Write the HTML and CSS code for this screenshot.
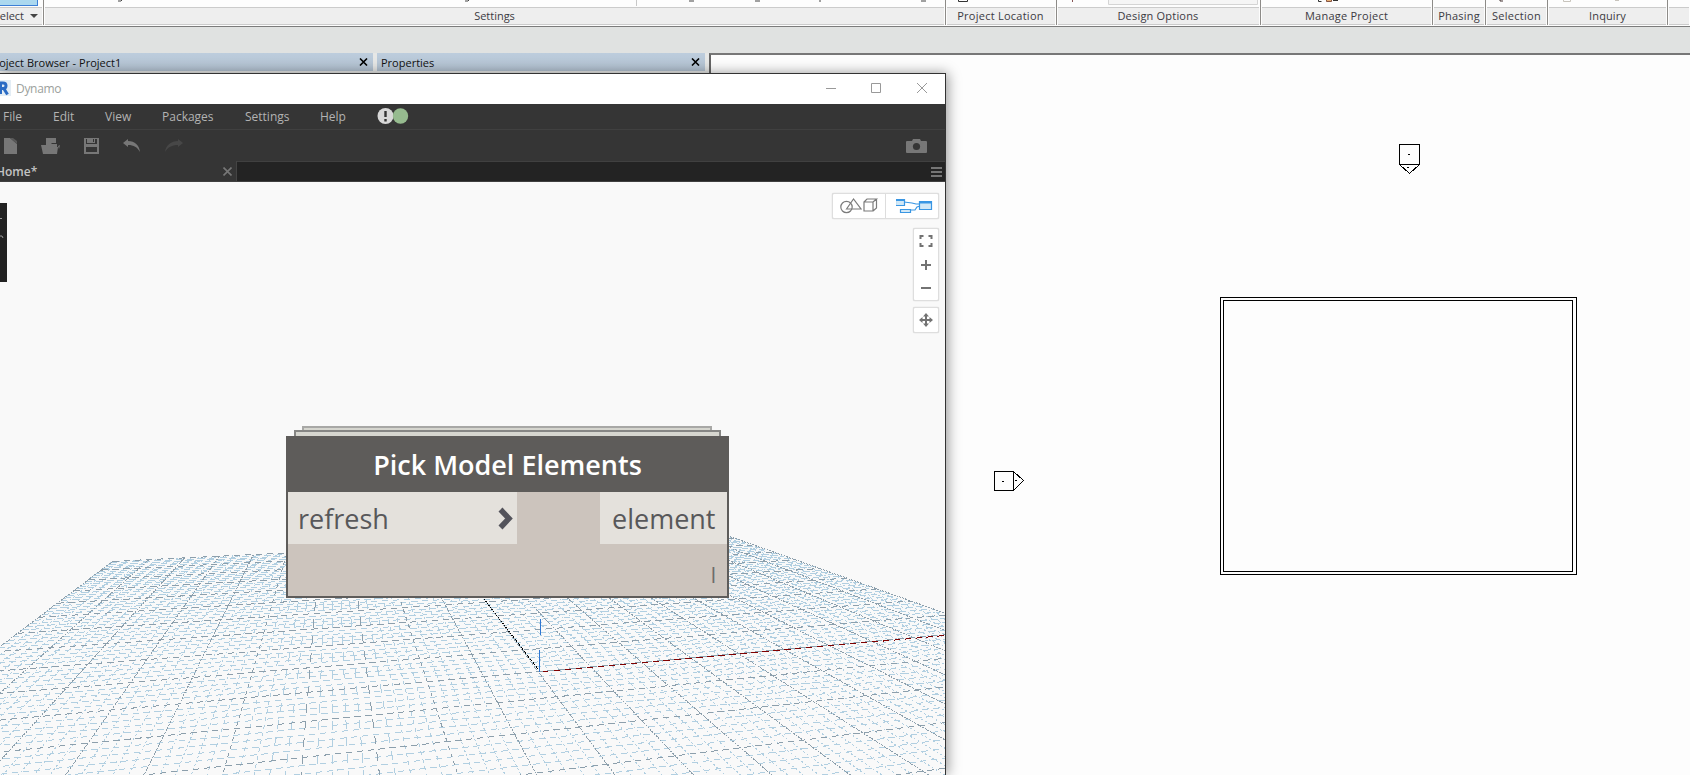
FILE: index.html
```html
<!DOCTYPE html>
<html lang="en">
<head>
<meta charset="utf-8">
<title>Dynamo</title>
<link rel="stylesheet" href="styles.css">
</head>
<body>
<div class="app">
  <header class="ribbon">
    <section class="panel panel-select"><div class="panel-tools"><span class="select-button"></span></div><div class="panel-label">Select<i class="caret"></i></div></section>
    <section class="panel panel-settings"><div class="panel-tools">
      <svg width="900" height="7"><path d="M74 1h3l1-1M421 1h3l1-1M645 1h5M711 1h5M776 0v2M877 1h5" stroke="#444" fill="none"/><path d="M592.500 0v6" stroke="#c8c8c8"/></svg></div><div class="panel-label">Settings</div></section>
    <section class="panel panel-location"><div class="panel-tools"><svg width="110" height="7"><path d="M12.500 0v1.500h9V0" stroke="#333" fill="none"/></svg></div><div class="panel-label">Project Location</div></section>
    <section class="panel panel-options"><div class="panel-tools"><svg width="203" height="7"><path d="M15.500 0v2" stroke="#855"/><path d="M51.500 0v4.500h149V0" stroke="#d4d4d4" fill="#f5f5f5"/></svg></div><div class="panel-label">Design Options</div></section>
    <section class="panel panel-manage"><div class="panel-tools"><svg width="171" height="7"><path d="M57.500 0v1.500h3M72 .5h5" stroke="#333" fill="none"/><path d="M65.500 0v1.500h5V0" stroke="#854" fill="#e8b070"/></svg></div><div class="panel-label">Manage Project</div></section>
    <section class="panel panel-phasing"><div class="panel-tools"></div><div class="panel-label">Phasing</div></section>
    <section class="panel panel-selection"><div class="panel-tools"><svg width="61" height="7"><path d="M14 0v1h3" stroke="#433" fill="none"/></svg></div><div class="panel-label">Selection</div></section>
    <section class="panel panel-inquiry"><div class="panel-tools"><svg width="119" height="7"><path d="M15.500 0v1.500h7V0M67 .5h4" stroke="#c8c4bc" fill="none"/></svg></div><div class="panel-label">Inquiry</div></section>
    <section class="panel panel-rest"><div class="panel-tools"></div><div class="panel-label"></div></section>
  </header>
  <div class="options-bar"></div>
  <div class="workspace">
    <div class="palette palette-browser"><span class="browser-title">Project Browser - Project1</span><svg width="9" height="8"><path d="M1 .5l7 7M8 .5l-7 7" stroke="#000" stroke-width="1.600"/></svg></div>
    <div class="palette palette-properties"><span>Properties</span><svg width="9" height="8"><path d="M1 .5l7 7M8 .5l-7 7" stroke="#000" stroke-width="1.600"/></svg></div>
    <main class="plan">
      <svg class="drawing" width="979" height="720" viewBox="711 55 979 720" fill="none" stroke="#000" shape-rendering="crispEdges">
        <path d="M1220.500 297.500h356v277h-356zM1223.500 300.500h349v271h-349z"/>
        <path d="M1399.500 144.500h20v20h-20zM1399.500 164.500l10 9 10-9M1408 154.500h2M1407 167.500h2"/>
        <path d="M994.500 471.500h19v19h-19zM1013.500 471.500l10 9-10 10M1002 481.500h2M1015 480.500h2"/>
      </svg>
    </main>
  </div>
</div>

<div class="dynamo">
  <div class="titlebar">
    <svg class="logo" width="11" height="16" viewBox="0 0 11 16"><path d="M0 0h11v16H0z" fill="#e3edf5"/><path d="M0 3h3c4 0 4 5.500 0 5.500H0M3.500 8l4 6.500M.5 2v12" fill="none" stroke="#2a6bc4" stroke-width="3"/></svg>
    <span class="window-title">Dynamo</span>
    <svg class="window-buttons" width="102" height="12" fill="none" stroke="#999"><path d="M0 6.500h10M45.500 1.500h9v9h-9z"/><path d="M91 1l10 10M101 1L91 11"/></svg>
  </div>
  <nav class="menu">
    <span class="m-file">File</span><span class="m-edit">Edit</span><span class="m-view">View</span><span class="m-packages">Packages</span><span class="m-settings">Settings</span><span class="m-help">Help</span>
    <svg width="32" height="16"><circle cx="8.500" cy="8" r="8" fill="#d8d8d8"/><path d="M8.500 3v6M8.500 11v2.500" stroke="#333" stroke-width="2.400"/><circle cx="23.500" cy="8" r="7.700" fill="#96bb8f"/></svg>
  </nav>
  <div class="toolbar">
    <svg width="13" height="16" fill="#777"><path d="M0 0h6l7 6v10H0z"/><path d="M6 0l7 6V3l-4-3z" fill="#595959"/></svg>
    <svg width="19" height="16" fill="#777"><path d="M5 0h10v5h-4L9 7H5zM0 7h8l2-1h6v3h1l-1 7H2zM17 8l2-1-1 4z"/></svg>
    <svg width="15" height="16"><path d="M0 0h15v16H0z" fill="#777"/><path d="M2 1h11v5H2zM2 9h11v5H2z" fill="#353535"/><path d="M3 1h8v4H3z" fill="#777"/><path d="M9 1h1v3H9z" fill="#333"/></svg>
    <svg width="18" height="16" fill="#777"><path d="M0 5l5-4v2c7 0 11 4 12 11C14 9 11 7 5 7v2z"/></svg>
    <svg width="18" height="16" fill="#474747"><path d="M18 5l-5-4v2C6 3 1 7 0 14c3-5 7-7 13-7v2z"/></svg>
    <svg class="camera" width="21" height="14"><path d="M1 2h5l1-2h7l1 2h5q1 0 1 1v10q0 1-1 1H1q-1 0-1-1V3q0-1 1-1z" fill="#777"/><circle cx="10.500" cy="7.500" r="3.600" fill="#353535"/></svg>
  </div>
  <div class="tabs">
    <div class="tab"><span>Home*</span><svg width="9" height="9"><path d="M.5.5l8 8M8.500.5l-8 8" stroke="#777" stroke-width="1.600"/></svg></div>
    <svg class="burger" width="11" height="10"><path d="M0 1h11M0 5h11M0 9h11" stroke="#757575" stroke-width="2"/></svg>
  </div>
  <div class="canvas">
    <svg class="grid" width="945" height="593" viewBox="0 182 945 593" shape-rendering="crispEdges">
      <g id="grid-lines"></g>
      <path d="M484 599l55.500 72" stroke="#000" stroke-dasharray="1.600 .9"/>
      <path d="M543 671.500L945 635.500" stroke="#800000" stroke-dasharray="6.500 4.500"/>
      <path d="M540.500 619v16M539.500 650v22" stroke="#2f76d2"/>
    </svg>
    <div class="library"><svg width="7" height="79"><path d="M0 15.500h2M0 33h2l1 2" stroke="#999" fill="none"/></svg></div>
    <div class="controls">
      <div class="view-switch">
        <svg width="52" height="24" fill="none" stroke="#7b7b7b" stroke-width="1.200"><circle cx="13.500" cy="13" r="5.700"/><path d="M13.500 15l7-10 7.500 10zM31 8h9v9h-9zM31 8l3-3h9.500L40 8M43.500 5v9L40 17"/></svg>
        <svg class="active" width="52" height="24" fill="#d2e8f6" stroke="#3996e3" stroke-width="1.200"><path d="M8 8l8 1 4 1h3M13 16h6l2-3 3-1" fill="none"/><path d="M-.5 5.500h9v6h-9zM23.500 7.500h12v8h-12zM4.500 15.500h10v3h-10z"/><path d="M-1 6h10M23 8.500h13" stroke-width="2"/></svg>
      </div>
      <div class="zoom-box"><svg width="24" height="71" fill="none" stroke="#737373" stroke-width="2"><path d="M6.500 10V7h3M14.500 7h3v3M17.500 14v3h-3M9.500 17h-3v-3M7 36h10M12 31v10M7 59h10"/></svg></div>
      <div class="pan-box"><svg width="24" height="24"><path d="M12 6v12M6 12h12" stroke="#737373" stroke-width="2"/><path d="M12 5l3 3.500H9zM12 19l3-3.500H9zM5 12l3.500-3v6zM19 12l-3.500-3v6z" fill="#737373"/></svg></div>
    </div>
    <article class="node">
      <div class="sheet sheet-far"></div><div class="sheet sheet-near"></div>
      <h1>Pick Model Elements</h1>
      <div class="ports">
        <div class="port port-in"><span>refresh</span><svg width="15" height="23"><path d="M2.500 2.500l8.500 9-8.500 9" fill="none" stroke="#53535b" stroke-width="5.500"/></svg></div>
        <div class="port port-out"><span>element</span></div>
      </div>
      <div class="lacing">l</div>
    </article>
  </div>
</div>
<script src="grid.js"></script>
</body>
</html>
```
FILE: styles.css
```css
* { box-sizing: border-box; }
body { margin: 0; overflow: hidden; font-family: "Open Sans", "Noto Sans", sans-serif; }
svg { display: block; flex: none; }
.app { width: 1690px; height: 775px; display: flex; flex-direction: column; background: #fdfdfd; }
.ribbon { display: flex; height: 27px; background: #fdfdfd; border-bottom: 1px solid #7b7b7b; flex: none; }
.panel { height: 25px; border-right: 1px solid #8d8b88; display: flex; flex-direction: column; overflow: hidden; flex: none; }
.panel-tools { height: 7px; overflow: hidden; }
.panel-label { height: 18px; margin: 0 1px; border: solid #cbcbcb; border-width: 1px 0; background: #eee; color: #3c3a42; font-size: 11px; line-height: 16px; letter-spacing: -.02px; display: flex; justify-content: center; align-items: center; white-space: nowrap; }
.panel-select { width: 44px; }
.panel-select .panel-label { justify-content: flex-end; padding-right: 4px; margin-left: 0; }
.select-button { display: block; width: 38px; height: 6px; background: #abd8ef; border: solid #3c7fd6; border-width: 0 1px 1px 0; }
.caret { border: 4px solid transparent; border-top-color: #444; border-bottom: 0; margin-left: 6px; }
.panel-settings { width: 902px; }
.panel-location { width: 111px; }
.panel-location .panel-label { letter-spacing: .25px; padding-right: 1px; }
.panel-options { width: 204px; }
.panel-options .panel-label { letter-spacing: .2px; padding-right: 1px; }
.panel-manage { width: 172px; }
.panel-manage .panel-label { letter-spacing: .25px; }
.panel-phasing { width: 53px; }
.panel-phasing .panel-label { letter-spacing: .2px; }
.panel-selection { width: 62px; }
.panel-selection .panel-label { letter-spacing: .3px; }
.panel-inquiry { width: 120px; }
.panel-inquiry .panel-label { letter-spacing: .1px; }
.panel-rest { flex: 1; border-right: 0; }
.options-bar { height: 26px; background: #e0e2e1; flex: none; }
.workspace { display: flex; flex: 1; background: #e6e7e6; }
.palette { height: 18px; background: linear-gradient(#bdcddd, #b2c1d0); display: flex; justify-content: space-between; align-items: center; font-size: 11px; color: #111; white-space: nowrap; }
.palette-browser { width: 373px; margin-right: 4px; padding-right: 5px; }
.browser-title { margin-left: -12px; letter-spacing: .02px; }
.palette-properties { width: 328px; margin-right: 4px; padding: 0 5px 0 4px; }
.plan { flex: 1; border: solid #666; border-width: 2px 0 0 2px; border-top-color: #777; background: #fdfdfd; }
.dynamo { position: absolute; left: 0; top: 73px; width: 946px; height: 702px; border: solid #333; border-width: 1px 1px 0 0; background: #353535; box-shadow: 2px 0 12px rgba(0,0,0,.4); display: flex; flex-direction: column; overflow: visible; }
.titlebar { height: 30px; background: #fff; display: flex; align-items: center; color: #9c9f9c; font-size: 12px; flex: none; }
.window-title { margin: -1px 0 0 5px; letter-spacing: -.3px; }
.logo { margin-top: -2px; }
.window-buttons { margin: -3px 17px 0 auto; }
.menu { height: 26px; border-bottom: 1px solid #404040; display: flex; align-items: center; padding-left: 3px; font-size: 12px; color: #b3b3b3; flex: none; }
.menu svg { margin: -2px 0 0 1px; }
.m-file { width: 50px; } .m-edit { width: 52px; } .m-view { width: 57px; } .m-packages { width: 83px; } .m-settings { width: 75px; } .m-help { width: 56px; }
.toolbar { height: 32px; border-bottom: 1px solid #404040; display: flex; align-items: center; padding-left: 4px; gap: 24px; flex: none; }
.camera { margin: 0 18px 0 auto; }
.tabs { height: 20px; background: #232323; border-bottom: 1px solid #404040; display: flex; align-items: center; justify-content: space-between; padding-right: 3px; flex: none; }
.tab { width: 237px; height: 20px; margin-top: -1px; background: #353535; border-right: 1px solid #444; display: flex; align-items: center; justify-content: space-between; padding: 1px 4px 0 0; color: #c4c4c4; font-size: 12px; font-weight: 600; }
.tab span { margin-left: -4px; }
.canvas { position: relative; flex: 1; background: #f9f9f9; overflow: hidden; }
.grid { position: absolute; inset: 0; fill: none; }
.minor { stroke: #b1cfe1; }
.major { stroke: #8c9fac; }
.library { position: absolute; left: 0; top: 21px; width: 7px; height: 79px; background: #222; }
.controls { position: absolute; right: 6px; top: 11px; display: flex; flex-direction: column; align-items: flex-end; }
.view-switch, .zoom-box, .pan-box { background: #fff; border: 1px solid #dedede; border-radius: 2px; box-shadow: 0 0 1px #bbb; }
.view-switch { display: flex; width: 107px; height: 26px; }
.view-switch .active { border-left: 1px solid #ddd; padding-left: 10px; }
.zoom-box { width: 26px; height: 73px; margin-top: 9px; }
.pan-box { width: 26px; height: 26px; margin-top: 6px; }
.node { position: absolute; left: 286px; top: 254px; width: 443px; height: 162px; background: #ccc4bd; border: 2px solid #5e5c5a; color: #58585a; font-size: 27px; }
.node h1 { margin: 0; height: 54px; background: #5e5c5a; color: #fff; font-size: 27px; font-weight: 600; line-height: 53px; text-align: center; }
.sheet { position: absolute; background: #d6d6cf; }
.sheet-far { left: 14px; top: -12px; width: 410px; height: 5px; border: solid #a8a8a6; border-width: 2px 2px 0; }
.sheet-near { left: 6px; top: -8px; width: 427px; height: 6px; border: solid #868684; border-width: 2px 2px 0; }
.ports { display: flex; justify-content: space-between; height: 52px; }
.port { background: #e4e1dc; display: flex; align-items: center; justify-content: space-between; line-height: 53px; }
.port-in { width: 229px; padding: 0 4px 0 10px; }
.port-out { width: 127px; padding-left: 12px; }
.lacing { text-align: right; padding: 5px 11px 0 0; font-size: 21px; line-height: 52px; color: #6f6c6a; height: 52px; }
```
FILE: grid.js
```js
// Perspective projection of the ground plane, horizon at y = 395.
const HORIZON = 395;
const project = (u, v) => {
  const depth = 0.0036166 + 0.00001263 * u + 0.00006056 * v;
  return [332.5 + 0.0413 * (u + 18) / depth, HORIZON + 1 / depth];
};
const layer = document.getElementById('grid-lines');
function line(a, b, major, dash) {
  const el = document.createElementNS('http://www.w3.org/2000/svg', 'path');
  el.setAttribute('d', `M${a[0].toFixed(2)} ${a[1].toFixed(2)}L${b[0].toFixed(2)} ${b[1].toFixed(2)}`);
  el.setAttribute('class', major ? 'major' : 'minor');
  if (dash) el.setAttribute('stroke-dasharray', dash);
  layer.appendChild(el);
}
for (const major of [false, true]) {
  for (let i = -50; i <= 50; i++) {
    if ((i % 5 === 0) !== major) continue;
    const tilt = Math.abs(i + 18);
    const columnDash = tilt < 5 ? '9 8' : tilt < 9 ? '4 4' : major ? '2 1' : '2 2.4';
    line(project(i, 50), project(i, -32), major, columnDash);
    if (i >= -32) line(project(-50, i), project(50, i), major, '6.5 4.5');
  }
}
```
